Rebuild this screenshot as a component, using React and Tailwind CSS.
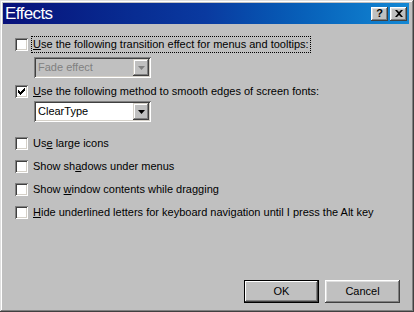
import React from "react";

const font = { fontFamily: '"Liberation Sans", Arial, sans-serif' };

function Checkbox({ checked }) {
  return (
    <div className="w-[13px] h-[13px] shrink-0 bg-white shadow-[inset_1px_1px_#808080,inset_-1px_-1px_#ffffff,inset_2px_2px_#404040,inset_-2px_-2px_#d4d0c8] flex items-center justify-center">
      {checked && (
        <svg width="7" height="7" viewBox="0 0 7 7">
          <path d="M0 2h1v1h1v1h1V3h1V2h1V1h1V0h1v3H6v1H5v1H4v1H3v1H2V6H1V5H0z" fill="#000" />
        </svg>
      )}
    </div>
  );
}

function Row({ checked, children, focus, className = "" }) {
  return (
    <div className={"flex items-center h-[17px] " + className}>
      <Checkbox checked={checked} />
      <div
        className={
          "ml-[3px] h-[17px] flex items-center px-[1px] text-[11px] text-black whitespace-nowrap " +
          (focus ? "border border-dotted border-black" : "border border-transparent")
        }
      >
        {children}
      </div>
    </div>
  );
}

function Combo({ text, disabled, className = "" }) {
  return (
    <div
      className={
        "ml-[19px] w-[117px] h-[21px] flex items-center p-[2px] shadow-[inset_1px_1px_#808080,inset_-1px_-1px_#ffffff,inset_2px_2px_#404040,inset_-2px_-2px_#d4d0c8] " +
        (disabled ? "bg-[#c0c0c0] " : "bg-white ") +
        className
      }
    >
      <div className={"flex-1 pl-[2px] text-[11px] " + (disabled ? "text-[#808080]" : "text-black")}>{text}</div>
      <div className="w-[16px] h-[17px] bg-[#c0c0c0] flex items-center justify-center shadow-[inset_-1px_-1px_#404040,inset_1px_1px_#d4d0c8,inset_-2px_-2px_#808080,inset_2px_2px_#ffffff]">
        <svg width="7" height="4" viewBox="0 0 7 4">
          <path d="M0 0h7L3.5 4z" fill={disabled ? "#808080" : "#000"} />
        </svg>
      </div>
    </div>
  );
}

function Button({ children, def }) {
  return (
    <div
      className={
        "w-[75px] h-[23px] flex items-center justify-center text-[11px] text-black bg-[#c0c0c0] " +
        (def
          ? "border border-black shadow-[inset_-1px_-1px_#404040,inset_1px_1px_#ffffff,inset_-2px_-2px_#808080]"
          : "shadow-[inset_-1px_-1px_#404040,inset_1px_1px_#ffffff,inset_-2px_-2px_#808080,inset_2px_2px_#dfdfdf]")
      }
    >
      {children}
    </div>
  );
}

function TitleBtn({ children }) {
  return (
    <div className="w-[17px] h-[14px] bg-[#c0c0c0] flex items-center justify-center shadow-[inset_-1px_-1px_#404040,inset_1px_1px_#ffffff,inset_-2px_-2px_#808080,inset_2px_2px_#dfdfdf]">
      {children}
    </div>
  );
}

export default function App() {
  return (
    <div
      style={font}
      className="w-[414px] h-[312px] bg-[#c0c0c0] p-[3px] flex flex-col shadow-[inset_-1px_-1px_#404040,inset_1px_1px_#dfdfdf,inset_-2px_-2px_#808080,inset_2px_2px_#ffffff]"
    >
      <div className="h-[21px] mr-[2px] bg-linear-to-r from-[#08107a] via-[#0a3aa0] to-[#1488d4] flex items-center pl-[2px] pr-[2px]">
        <div className="text-white text-[17px] leading-none tracking-[-0.6px] flex-1">Effects</div>
        <TitleBtn>
          <span className="text-[11px] font-bold leading-none text-black">?</span>
        </TitleBtn>
        <div className="w-[2px]" />
        <TitleBtn>
          <svg width="8" height="7" viewBox="0 0 8 7">
            <path d="M0 0h2l2 2 2-2h2L5 3.5 8 7H6L4 5 2 7H0l3-3.5z" fill="#000" />
          </svg>
        </TitleBtn>
      </div>
      <div className="flex-1 flex flex-col pl-[12px]">
        <Row focus className="mt-[12px]">
          <span><u>U</u>se the following transition effect for menus and tooltips:</span>
        </Row>
        <Combo disabled text="Fade effect" className="mt-[4px]" />
        <Row checked className="mt-[5px]">
          <span><u>U</u>se the following method to smooth edges of screen fonts:</span>
        </Row>
        <Combo text="ClearType" className="mt-[1px]" />
        <Row className="mt-[13px]">
          <span>Us<u>e</u> large icons</span>
        </Row>
        <Row className="mt-[6px]">
          <span>Show sh<u>a</u>dows under menus</span>
        </Row>
        <Row className="mt-[6px]">
          <span>Show <u>w</u>indow contents while dragging</span>
        </Row>
        <Row className="mt-[6px]">
          <span><u>H</u>ide underlined letters for keyboard navigation until I press the Alt key</span>
        </Row>
        <div className="mt-auto mb-[6px] flex justify-end gap-[6px] pr-[11px]">
          <Button def>OK</Button>
          <Button>Cancel</Button>
        </div>
      </div>
    </div>
  );
}
